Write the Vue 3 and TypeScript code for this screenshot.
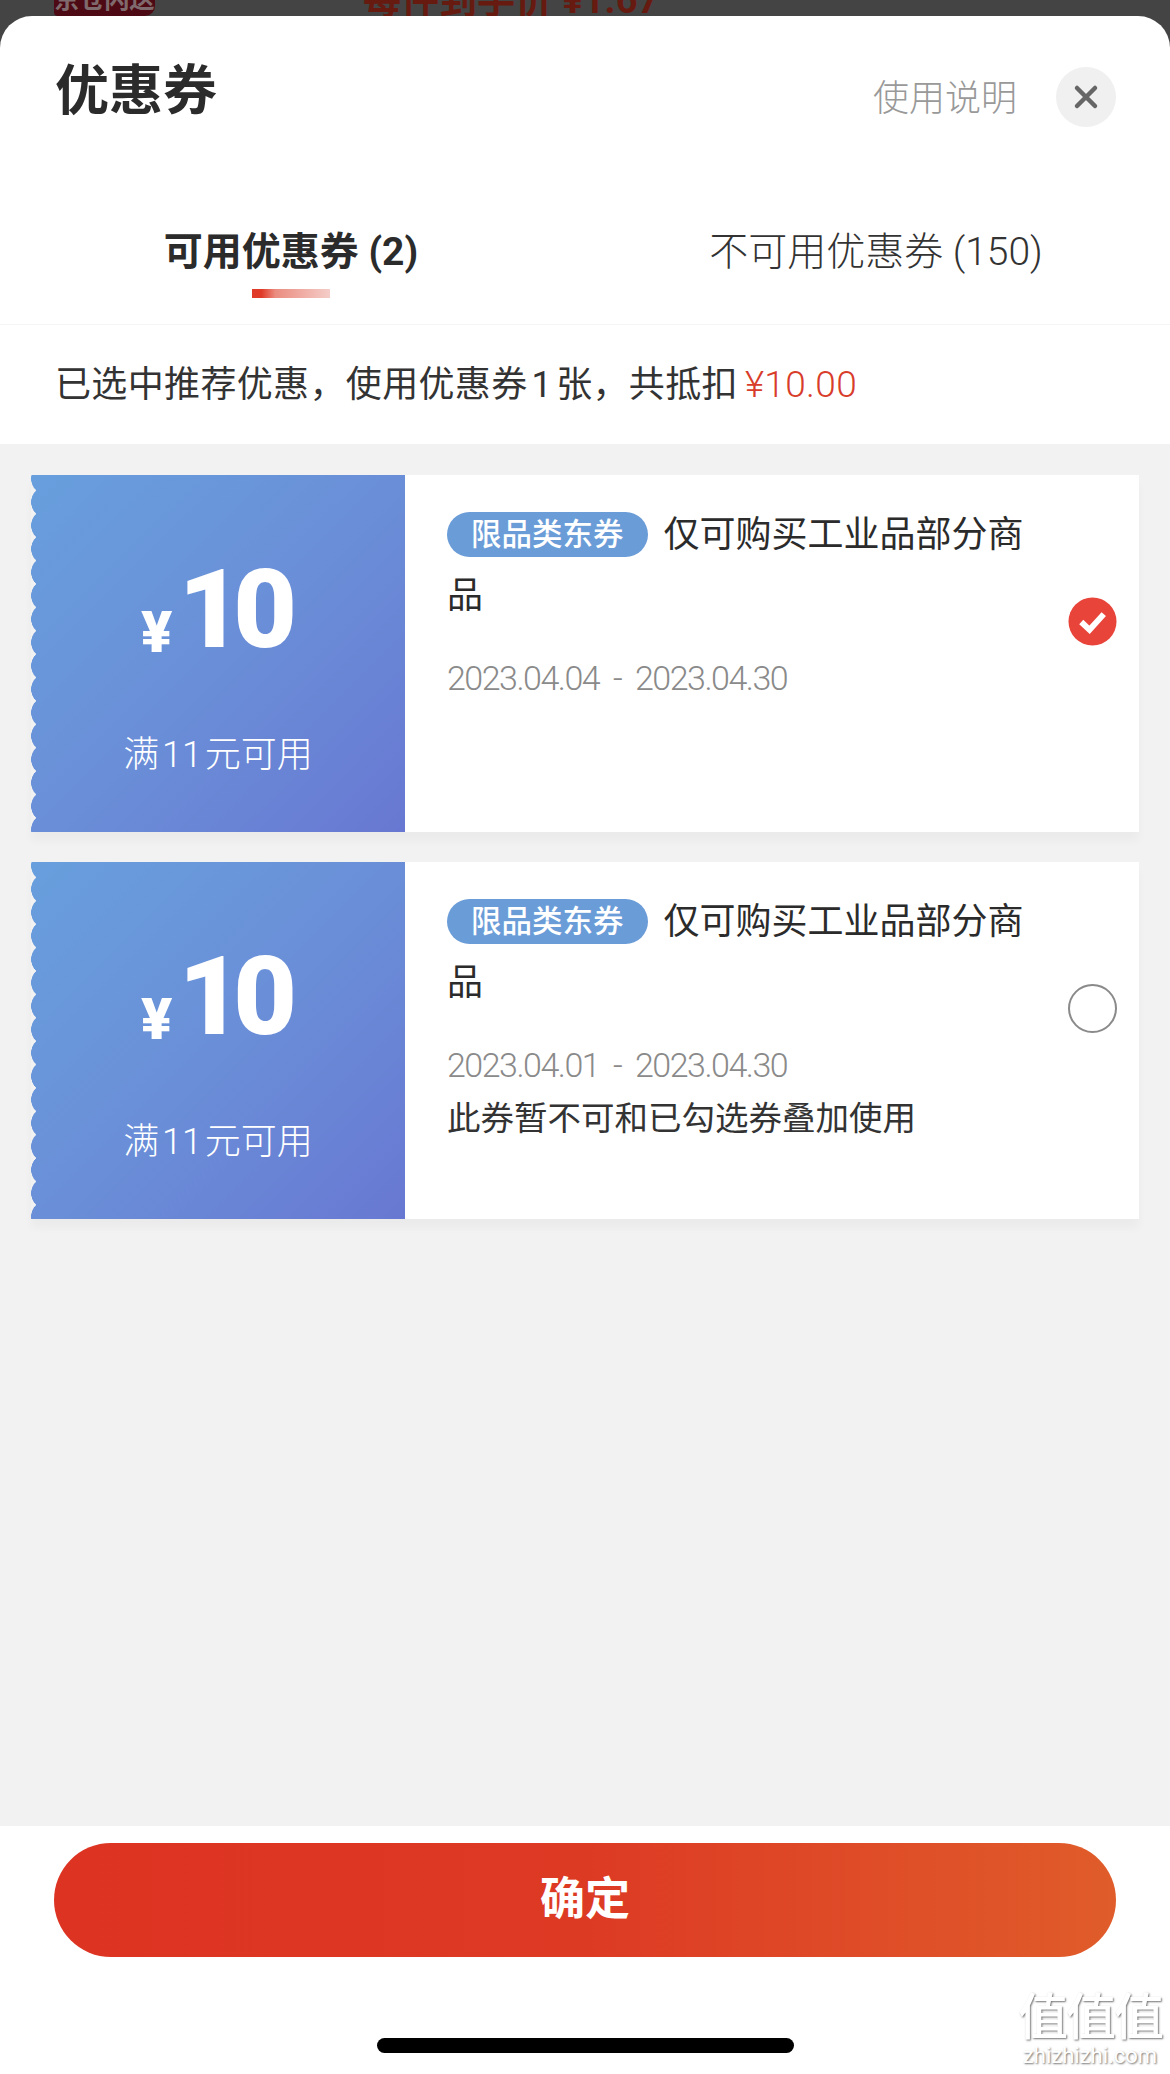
<script setup lang="ts">
import { ref } from 'vue'

interface Coupon {
  id: number
  date: string
  note?: string
  checked: boolean
}

const coupons = ref<Coupon[]>([
  { id: 1, date: '2023.04.04 - 2023.04.30', checked: true },
  { id: 2, date: '2023.04.01 - 2023.04.30', note: '此券暂不可和已勾选券叠加使用', checked: false }
])
</script>

<template>
  <div class="page">
    <div class="peek">
      <span class="peek-badge">京仓闪送</span>
      <span class="peek-price">每件到手价 ¥1.67</span>
    </div>

    <div class="sheet">
      <div class="header">
        <div class="title">优惠券</div>
        <div class="header-right">
          <span class="help">使用说明</span>
          <span class="close">
            <svg width="26" height="26" viewBox="0 0 26 26">
              <path d="M4 4 22 22M22 4 4 22" stroke="#666" stroke-width="4.5" stroke-linecap="round" fill="none" />
            </svg>
          </span>
        </div>
      </div>

      <div class="tabs">
        <div class="tab active">
          <span>可用优惠券 (2)</span>
          <i class="tab-line"></i>
        </div>
        <div class="tab">
          <span>不可用优惠券 (150)</span>
        </div>
      </div>

      <div class="summary">
        已选中推荐优惠，使用优惠券<span class="num">1</span>张，共抵扣<span class="red">¥10.00</span>
      </div>

      <div class="list">
        <div v-for="item in coupons" :key="item.id" class="card">
          <div class="card-left">
            <div class="amount"><span class="yen">¥</span><span class="value">10</span></div>
            <div class="limit">满 11 元可用</div>
          </div>
          <div class="card-body">
            <div class="desc"><span class="tag">限品类东券</span>仅可购买工业品部分商品</div>
            <div class="date">{{ item.date }}</div>
            <div v-if="item.note" class="note">{{ item.note }}</div>
          </div>
          <div class="card-check">
            <svg v-if="item.checked" width="49" height="49" viewBox="0 0 50 50">
              <circle cx="25" cy="25" r="24.5" fill="#e8443a" />
              <path d="M13.5 25.5 22 33.5 36.5 17.5" stroke="#fff" stroke-width="6" fill="none" />
            </svg>
            <span v-else class="radio"></span>
          </div>
        </div>
      </div>

      <div class="footer">
        <div class="confirm">确定</div>
        <div class="home-bar"></div>
      </div>
    </div>

    <div class="watermark">
      <div class="wm-big">值值值</div>
      <div class="wm-small">zhizhizhi.com</div>
    </div>
  </div>
</template>

<style>
html,
body {
  margin: 0;
  background: #444;
}
</style>

<style scoped>
.page {
  position: relative;
  width: 1170px;
  height: 2074px;
  display: flex;
  flex-direction: column;
  overflow: hidden;
  background: #444;
  font-family: Roboto, "Noto Sans CJK SC", sans-serif;
  color: #333;
}

.peek {
  height: 16px;
  display: flex;
  overflow: hidden;
  flex-shrink: 0;
}

.peek-badge {
  width: 101px;
  height: 16px;
  margin-left: 54px;
  background: #4e0a14;
  color: #7f6a6d;
  font-size: 25px;
  font-weight: 700;
  line-height: 0;
  text-align: center;
  white-space: nowrap;
  border-radius: 0 0 10px 4px;
}

.peek-price {
  margin-left: 208px;
  color: #661a10;
  font-size: 38px;
  font-weight: 700;
  line-height: 0;
  white-space: nowrap;
}

.sheet {
  flex: 1;
  display: flex;
  flex-direction: column;
  background: #fff;
  border-radius: 32px 32px 0 0;
  overflow: hidden;
}

.header {
  height: 174px;
  box-sizing: border-box;
  padding: 44px 54px 0 55px;
  display: flex;
  justify-content: space-between;
  align-items: flex-start;
}

.title {
  font-size: 54px;
  line-height: 64px;
  font-weight: 700;
  color: #2b2b2b;
}

.header-right {
  margin-top: 7px;
  display: flex;
  align-items: center;
  gap: 39px;
}

.help {
  margin-top: -5px;
  font-size: 36px;
  color: #999;
  font-weight: 300;
}

.close {
  width: 60px;
  height: 60px;
  border-radius: 50%;
  background: #f0f0f0;
  display: flex;
  align-items: center;
  justify-content: center;
}

.tabs {
  height: 134px;
  display: flex;
  border-bottom: 1px solid #f5f5f5;
}

.tab {
  flex: 1;
  padding: 37px 3px 0 0;
  display: flex;
  flex-direction: column;
  align-items: center;
  font-size: 39px;
  line-height: 50px;
  font-weight: 300;
  color: #333;
}

.tab.active {
  font-weight: 700;
  color: #2b2b2b;
}

.tab-line {
  display: block;
  width: 78px;
  height: 9px;
  margin-top: 12px;
  background: linear-gradient(90deg, #e03a28 0, #e03a28 12%, #eb8c80 30%, #f4cdc8 100%);
}

.summary {
  height: 119px;
  box-sizing: border-box;
  padding-left: 55px;
  font-size: 36px;
  line-height: 119px;
  font-weight: 400;
  letter-spacing: 0.35px;
  color: #333;
  white-space: nowrap;
}

.num {
  margin: 0 4px;
}

.red {
  margin-left: 7px;
  font-size: 37px;
  font-weight: 300;
  color: #d83c2a;
}

.list {
  flex: 1;
  background: #f2f2f2;
  padding: 31px 31px 0;
  display: flex;
  flex-direction: column;
  gap: 30px;
}

.card {
  height: 357px;
  display: flex;
  background: #fff;
  box-shadow: 0 9px 9px rgba(0, 0, 0, 0.03);
}

.card-left {
  position: relative;
  width: 374px;
  flex-shrink: 0;
  background: linear-gradient(135deg, #689fdd 0%, #6a8fd8 50%, #6878d2 100%);
  color: #fff;
  text-align: center;
  overflow: hidden;
}

/* scalloped left edge, round bumps with sharp cusps */
.card-left::before {
  content: "";
  position: absolute;
  left: 0;
  top: 0;
  bottom: 0;
  width: 7px;
  background: radial-gradient(circle at 16px 50%, transparent 15.6px, #f2f2f2 16.1px) 0 -8px / 7px 23.4px repeat-y;
}

.amount {
  height: 110px;
  margin-top: 80px;
  display: flex;
  justify-content: center;
  align-items: flex-end;
  padding-left: 2px;
}

.yen {
  font-size: 58px;
  line-height: 50px;
  font-weight: 900;
  margin-bottom: 8px;
  margin-right: 6px;
}

.value {
  font-size: 110px;
  line-height: 110px;
  font-weight: 900;
  letter-spacing: -9px;
  margin-right: 9px;
}

.limit {
  margin-top: 65px;
  font-size: 36px;
  line-height: 50px;
  font-weight: 300;
  word-spacing: -6px;
}

.card-body {
  flex: 1;
  padding: 30px 0 0 42px;
}

.desc {
  width: 600px;
  font-size: 36px;
  line-height: 61px;
  color: #2b2b2b;
  font-weight: 400;
}

.tag {
  display: inline-block;
  height: 45px;
  line-height: 45px;
  margin-right: 16px;
  padding: 0 24px;
  border-radius: 23px;
  background: #6a9cd8;
  color: #fff;
  font-size: 30.5px;
  font-weight: 500;
  vertical-align: 2px;
}

.date {
  margin-top: 26px;
  font-size: 34px;
  line-height: 50px;
  font-weight: 300;
  letter-spacing: -1.5px;
  word-spacing: 7px;
  color: #8a8a8a;
}

.note {
  margin-top: 4px;
  font-size: 33.5px;
  line-height: 50px;
  font-weight: 400;
  color: #333;
}

.card-check {
  width: 71px;
  flex-shrink: 0;
  padding-top: 122px;
}

.radio {
  display: block;
  width: 45px;
  height: 45px;
  border: 2px solid #8a8a8a;
  border-radius: 50%;
}

.footer {
  height: 248px;
  flex-shrink: 0;
  background: #fff;
  padding-top: 17px;
  box-sizing: border-box;
  display: flex;
  flex-direction: column;
  align-items: center;
}

.confirm {
  width: 1062px;
  height: 114px;
  border-radius: 57px;
  background: linear-gradient(90deg, #dd3322 0%, #dd3a24 50%, #e05c2a 100%);
  color: #fff;
  font-size: 45px;
  font-weight: 700;
  line-height: 114px;
  text-align: center;
}

.home-bar {
  width: 417px;
  height: 15px;
  margin-top: 81px;
  border-radius: 8px;
  background: #000;
}

.watermark {
  position: absolute;
  right: 8px;
  bottom: 8px;
  width: 144px;
  text-align: center;
  color: #fff;
  text-shadow: 1px 1px 2px rgba(0, 0, 0, 0.55);
}

.wm-big {
  font-size: 50px;
  line-height: 56px;
  font-weight: 500;
  letter-spacing: -2px;
}

.wm-small {
  font-size: 22px;
  line-height: 20px;
  white-space: nowrap;
}
</style>
